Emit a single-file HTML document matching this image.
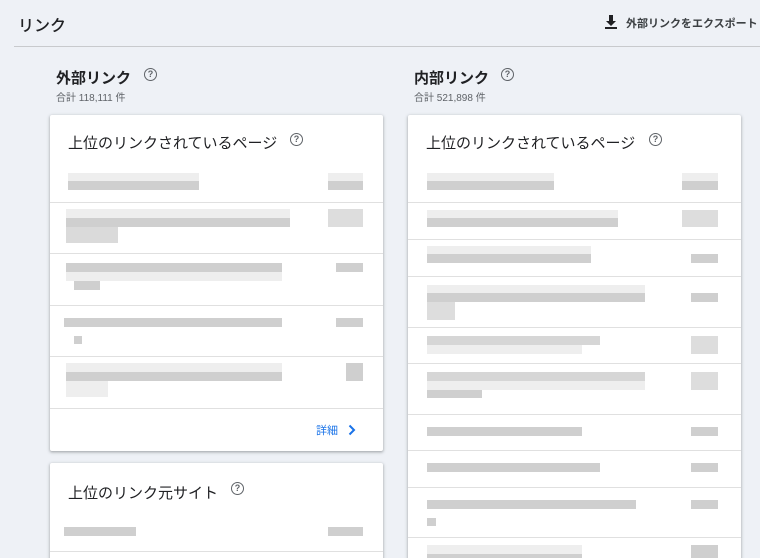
<!DOCTYPE html><html style="width:760px;height:558px;overflow:hidden"><head><meta charset="utf-8"><style>
body{margin:0;width:760px;height:558px;background:#eef1f6;font-family:"Liberation Sans","Noto Sans CJK JP",sans-serif;position:relative;overflow:hidden;color:#202124}
.a{position:absolute}
.card{position:absolute;background:#fff;box-shadow:0 1px 2px rgba(60,64,67,.3),0 1px 3px 1px rgba(60,64,67,.15);border-radius:2px}
.dv{position:absolute;left:0;right:0;height:1px;background:#e0e0e0}
.b{position:absolute;background:#cfcfcf}
.l{position:absolute;background:#eeeeee}
.q{position:absolute;width:11px;height:11px;border:1.3px solid #5f6368;border-radius:50%;font-size:9px;line-height:11px;text-align:center;color:#5f6368;font-weight:bold}
</style></head><body>
<div class="a" style="left:18px;top:12px;font-size:16px;font-weight:500">リンク</div>
<svg class="a" style="left:604px;top:14px" width="14" height="16" viewBox="0 0 14 16"><path d="M5 1h4v6h3l-5 5-5-5h3z M1 13h12v2H1z" fill="#202124"/></svg>
<div class="a" style="left:626px;top:15px;font-size:11px;font-weight:bold;color:#3c4043">外部リンクをエクスポート</div>
<div class="a" style="left:14px;right:0;top:46px;height:1px;background:#c8cacd"></div>

<div class="a" style="left:56px;top:67px;font-size:15px;font-weight:bold">外部リンク</div>
<div class="q" style="left:144px;top:68px">?</div>
<div class="a" style="left:56px;top:89px;font-size:10px;color:#5f6368">合計 118,111 件</div>
<div class="a" style="left:414px;top:67px;font-size:15px;font-weight:bold">内部リンク</div>
<div class="q" style="left:501px;top:68px">?</div>
<div class="a" style="left:414px;top:89px;font-size:10px;color:#5f6368">合計 521,898 件</div>

<div class="card" style="left:50px;top:115px;width:333px;height:336px">
<div class="a" style="left:18px;top:17px;font-size:15px">上位のリンクされているページ</div>
<div class="q" style="left:240px;top:18px">?</div>
<div class="l" style="left:18px;top:58px;width:131px;height:8px"></div><div class="b" style="left:18px;top:66px;width:131px;height:9px"></div>
<div class="l" style="left:278px;top:58px;width:35px;height:8px"></div><div class="b" style="left:278px;top:66px;width:35px;height:9px"></div>
<div class="dv" style="top:87px"></div>
<div class="l" style="left:16px;top:94px;width:224px;height:9px"></div><div class="b" style="left:16px;top:103px;width:224px;height:9px"></div><div class="b" style="left:16px;top:112px;width:52px;height:16px;background:#dadada"></div>
<div class="b" style="left:278px;top:94px;width:35px;height:18px;background:#ddd"></div>
<div class="dv" style="top:138px"></div>
<div class="b" style="left:16px;top:148px;width:216px;height:9px"></div><div class="l" style="left:16px;top:157px;width:216px;height:9px"></div><div class="b" style="left:24px;top:166px;width:26px;height:9px"></div>
<div class="b" style="left:286px;top:148px;width:27px;height:9px"></div>
<div class="dv" style="top:190px"></div>
<div class="b" style="left:14px;top:203px;width:218px;height:9px"></div><div class="b" style="left:24px;top:221px;width:8px;height:8px"></div>
<div class="b" style="left:286px;top:203px;width:27px;height:9px"></div>
<div class="dv" style="top:241px"></div>
<div class="l" style="left:16px;top:248px;width:216px;height:9px"></div><div class="b" style="left:16px;top:257px;width:216px;height:9px"></div><div class="l" style="left:16px;top:266px;width:42px;height:16px"></div>
<div class="b" style="left:296px;top:248px;width:17px;height:18px"></div>
<div class="dv" style="top:293px"></div>
<div class="a" style="left:266px;top:307px;font-size:11px;color:#1a73e8">詳細</div>
<svg class="a" style="left:298px;top:309px" width="8" height="12" viewBox="0 0 8 12"><path d="M1.5 1.5l4.5 4.5-4.5 4.5" stroke="#1a73e8" stroke-width="2" fill="none"/></svg>
</div>

<div class="card" style="left:50px;top:463px;width:333px;height:120px">
<div class="a" style="left:18px;top:19px;font-size:15px">上位のリンク元サイト</div>
<div class="q" style="left:181px;top:19px">?</div>
<div class="b" style="left:14px;top:64px;width:72px;height:9px"></div>
<div class="b" style="left:278px;top:64px;width:35px;height:9px"></div>
<div class="dv" style="top:88px"></div>
</div>

<div class="card" style="left:408px;top:115px;width:333px;height:460px">
<div class="a" style="left:18px;top:17px;font-size:15px">上位のリンクされているページ</div>
<div class="q" style="left:241px;top:18px">?</div>
<div class="l" style="left:19px;top:58px;width:127px;height:8px"></div><div class="b" style="left:19px;top:66px;width:127px;height:9px"></div>
<div class="l" style="left:274px;top:58px;width:36px;height:8px"></div><div class="b" style="left:274px;top:66px;width:36px;height:9px"></div>
<div class="dv" style="top:87px"></div>
<div class="l" style="left:19px;top:95px;width:191px;height:8px"></div><div class="b" style="left:19px;top:103px;width:191px;height:9px"></div><div class="b" style="left:274px;top:95px;width:36px;height:17px;background:#ddd"></div>
<div class="dv" style="top:124px"></div>
<div class="l" style="left:19px;top:131px;width:164px;height:8px"></div><div class="b" style="left:19px;top:139px;width:164px;height:9px"></div><div class="b" style="left:283px;top:139px;width:27px;height:9px"></div>
<div class="dv" style="top:161px"></div>
<div class="l" style="left:19px;top:170px;width:218px;height:8px"></div><div class="b" style="left:19px;top:178px;width:218px;height:9px"></div><div class="l" style="left:19px;top:187px;width:28px;height:18px;background:#ddd"></div><div class="b" style="left:283px;top:178px;width:27px;height:9px"></div>
<div class="dv" style="top:212px"></div>
<div class="b" style="left:19px;top:221px;width:173px;height:9px;background:#d6d6d6"></div><div class="l" style="left:19px;top:230px;width:155px;height:9px"></div><div class="b" style="left:283px;top:221px;width:27px;height:18px;background:#ddd"></div>
<div class="dv" style="top:248px"></div>
<div class="b" style="left:19px;top:257px;width:218px;height:9px;background:#d6d6d6"></div><div class="l" style="left:19px;top:266px;width:218px;height:9px"></div><div class="b" style="left:19px;top:275px;width:55px;height:8px"></div><div class="b" style="left:283px;top:257px;width:27px;height:18px;background:#ddd"></div>
<div class="dv" style="top:299px"></div>
<div class="b" style="left:19px;top:312px;width:155px;height:9px"></div><div class="b" style="left:283px;top:312px;width:27px;height:9px"></div>
<div class="dv" style="top:335px"></div>
<div class="b" style="left:19px;top:348px;width:173px;height:9px"></div><div class="b" style="left:283px;top:348px;width:27px;height:9px"></div>
<div class="dv" style="top:372px"></div>
<div class="b" style="left:19px;top:385px;width:209px;height:9px"></div><div class="b" style="left:19px;top:403px;width:9px;height:8px"></div><div class="b" style="left:283px;top:385px;width:27px;height:9px"></div>
<div class="dv" style="top:422px"></div>
<div class="l" style="left:19px;top:430px;width:155px;height:9px"></div><div class="b" style="left:19px;top:439px;width:155px;height:9px"></div><div class="b" style="left:283px;top:430px;width:27px;height:18px"></div>
</div>
</body></html>
